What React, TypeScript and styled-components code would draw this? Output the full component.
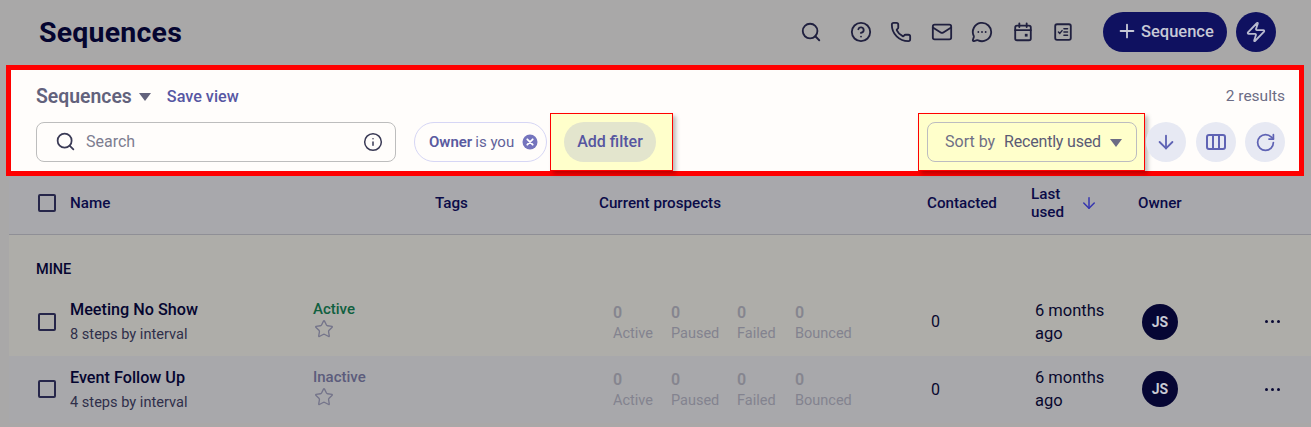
import React from "react";
import styled, { createGlobalStyle } from "styled-components";
import { ArrowDown, CircleHelp, Info, Mail, MessageCircleMore, Phone, Plus, RotateCw, Search, Star, Zap } from "lucide-react";

const GlobalStyle = createGlobalStyle`
    html, body {
        margin: 0;
        height: 100%;
        overflow: hidden;
    }
    body {
        background: #a9a8a8;
        font-family: Roboto, "Liberation Sans", sans-serif;
    }
`;

const Page = styled.div`
    width: 1311px;
    height: 427px;
    overflow: hidden;
`;

const Header = styled.header`
    height: 65px;
    display: flex;
    align-items: center;
    padding: 0 35px 1px 39px;
    box-sizing: border-box;
`;

const Title = styled.h1`
    margin: 0 auto 0 0;
    font-size: 28.5px;
    font-weight: 700;
    color: #050530;
    letter-spacing: 0.2px;
`;

const HeaderIcons = styled.div`
    display: flex;
    align-items: center;
    gap: 18.5px;
    color: #20203f;
    margin-right: 29px;
    & > svg {
        width: 22px;
        height: 22px;
    }
    & > svg:first-child {
        margin-right: 9.5px;
    }
`;

const NewButton = styled.button`
    height: 40px;
    width: 124px;
    border: none;
    border-radius: 20px;
    background: #0f1160;
    color: #c7c9d6;
    font: 500 16.5px Roboto, sans-serif;
    display: flex;
    align-items: center;
    gap: 3px;
    padding: 0 0 2px 13px;
`;

const BoltButton = styled.button`
    width: 40px;
    height: 40px;
    margin-left: 9px;
    border: none;
    border-radius: 50%;
    background: #0f1160;
    color: #b9bbd0;
    display: flex;
    align-items: center;
    justify-content: center;
    padding: 0;
`;

const Panel = styled.section`
    height: 111px;
    box-sizing: border-box;
    margin: 0 7px 0 6px;
    border: 5px solid #ff0000;
    background: #fffdfb;
    padding: 0 14px 0 25px;
`;

const PanelTop = styled.div`
    height: 52px;
    display: flex;
    align-items: center;
`;

const ViewName = styled.span`
    font-size: 19.4px;
    font-weight: 600;
    color: #62627c;
`;

const Caret = styled.span<{ $color: string }>`
    display: inline-block;
    width: 0;
    height: 0;
    border-left: 6.5px solid transparent;
    border-right: 6.5px solid transparent;
    border-top: 8px solid ${(p) => p.$color};
`;

const ViewCaret = styled(Caret)`
    margin: 1px 0 0 7px;
`;

const SaveView = styled.span`
    margin-left: 16px;
    font-size: 16.2px;
    font-weight: 500;
    color: #5757a3;
`;

const Results = styled.span`
    margin-left: auto;
    font-size: 15.5px;
    color: #6c6c85;
`;

const Controls = styled.div`
    display: flex;
    align-items: center;
    height: 40px;
`;

const SearchBox = styled.div`
    width: 360px;
    height: 40px;
    box-sizing: border-box;
    border: 1px solid #bdbdbd;
    border-radius: 8px;
    display: flex;
    align-items: center;
    padding: 0 12px 1px 18px;
    color: #3a3a55;
`;

const SearchText = styled.span`
    margin-left: 10px;
    margin-right: auto;
    font-size: 16px;
    color: #7d7d90;
`;

const OwnerChip = styled.div`
    margin-left: 18px;
    width: 133px;
    height: 40px;
    box-sizing: border-box;
    border: 1px solid #d6d6f5;
    border-radius: 20px;
    display: flex;
    align-items: center;
    padding: 0 0 1px 14px;
    font-size: 15px;
    color: #62629a;
`;

const OwnerStrong = styled.strong`
    font-weight: 600;
    color: #5a5aa0;
    margin-right: 3px;
`;

const ChipClose = styled.svg`
    margin-left: 8px;
`;

const Highlight = styled.div<{ $left: number; $right: number }>`
    height: 58px;
    box-sizing: border-box;
    background: #ffffcb;
    border: 1px solid #f00;
    box-shadow: 3px 3px 4px rgba(0, 0, 0, 0.25);
    display: flex;
    align-items: center;
    padding: 0 ${(p) => p.$right}px 0 ${(p) => p.$left}px;
`;

const FilterHighlight = styled(Highlight)`
    margin-left: 3px;
`;

const SortHighlight = styled(Highlight)`
    margin-left: auto;
`;

const AddFilter = styled.div`
    width: 92px;
    height: 40px;
    box-sizing: border-box;
    padding-bottom: 1px;
    border-radius: 20px;
    background: #e3e5cd;
    color: #5656a0;
    font-size: 16px;
    font-weight: 500;
    display: flex;
    align-items: center;
    justify-content: center;
`;

const SortBox = styled.div`
    width: 210px;
    height: 40px;
    box-sizing: border-box;
    border: 1px solid #bcbcc0;
    border-radius: 8px;
    display: flex;
    align-items: center;
    padding: 0 14px 1px 17px;
    font-size: 16px;
    color: #5b5b75;
`;

const SortLabel = styled.span`
    color: #6f6f86;
    margin-right: 9px;
`;

const SortValue = styled.span`
    letter-spacing: -0.2px;
`;

const SortCaret = styled(Caret)`
    margin-left: auto;
    margin-top: 2px;
`;

const RoundButton = styled.div`
    width: 40px;
    height: 40px;
    border-radius: 50%;
    margin-left: 9.5px;
    background: #e7e9f3;
    color: #5f63b4;
    display: flex;
    align-items: center;
    justify-content: center;
    flex-shrink: 0;
`;

const FirstRoundButton = styled(RoundButton)`
    margin-left: 1px;
`;

const TableWrap = styled.div`
    margin-left: 9px;
    background: #aeada9;
`;

const columns = "32px 243px 122px 164px 328px 104px 107px 127px 1fr";

const HeadRow = styled.div`
    display: grid;
    grid-template-columns: ${columns};
    align-items: center;
    height: 59px;
    box-sizing: border-box;
    padding: 0 0 4px 29px;
    background: #a8a8ac;
    border-bottom: 1px solid #8f8f96;
    font-size: 15.2px;
    font-weight: 500;
    color: #0b0b48;
`;

const NameHead = styled.div`
    grid-column: 2 / 4;
`;

const LastUsedHead = styled.div`
    display: flex;
    align-items: center;
    line-height: 18px;
    gap: 16px;
    color: #0b0b48;
`;

const LastUsedLabel = styled.div`
    width: 33px;
`;

const SortArrow = styled(ArrowDown)`
    color: #3636b0;
`;

const Box = styled.span`
    display: block;
    width: 14px;
    height: 14px;
    border: 2px solid #26264a;
    border-radius: 2px;
`;

const GroupLabel = styled.div`
    height: 53px;
    padding: 24px 0 0 27px;
    box-sizing: border-box;
    font-size: 14.5px;
    font-weight: 500;
    color: #050530;
    line-height: 22px;
`;

const Row = styled.div<{ $shaded: boolean }>`
    display: grid;
    grid-template-columns: ${columns};
    align-items: center;
    height: 67.5px;
    box-sizing: border-box;
    padding-left: 29px;
    background: ${(p) => (p.$shaded ? "#a8a8ab" : "#aeada9")};
`;

const NameCell = styled.div`
    display: flex;
    flex-direction: column;
    gap: 3px;
`;

const RowTitle = styled.div`
    font-size: 16.2px;
    font-weight: 500;
    color: #050530;
    line-height: 22px;
`;

const RowSub = styled.div`
    font-size: 14.6px;
    color: #2f2f4a;
    line-height: 20px;
`;

const StatusCell = styled.div<{ $active: boolean }>`
    font-size: 15px;
    font-weight: 500;
    line-height: 20px;
    color: ${(p) => (p.$active ? "#10603f" : "#5c5c7c")};
    margin-top: -5px;
`;

const StarIcon = styled(Star)`
    display: block;
    color: #74748a;
    margin: 0 0 0 1px;
`;

const Stats = styled.div`
    grid-column: 5;
    display: flex;
    padding: 2px 0 0 14px;
`;

const Stat = styled.div<{ $width: number }>`
    width: ${(p) => p.$width}px;
    color: #83838f;
    font-size: 14.5px;
    line-height: 21px;
`;

const StatNum = styled.div`
    font-size: 16px;
    font-weight: 600;
    color: #85858f;
`;

const Contacted = styled.div`
    padding-left: 4px;
    font-size: 16px;
    color: #08082e;
`;

const LastUsed = styled.div`
    padding-left: 4px;
    width: 80px;
    font-size: 16.5px;
    line-height: 23px;
    color: #08082e;
`;

const Avatar = styled.div`
    width: 36px;
    height: 36px;
    margin-left: 4px;
    border-radius: 50%;
    background: #060634;
    color: #c8c9d4;
    font-size: 14px;
    font-weight: 700;
    display: flex;
    align-items: center;
    justify-content: center;
`;

const More = styled.div`
    display: flex;
    gap: 3px;
`;

const Dot = styled.span`
    width: 3px;
    height: 3px;
    border-radius: 50%;
    background: #0a0a35;
`;

function CalendarIcon() {
    return (
        <svg width="24" height="24" viewBox="0 0 24 24" fill="none" stroke="currentColor" strokeWidth="2" strokeLinecap="round">
            <rect x="3.5" y="5" width="17" height="16" rx="2" />
            <path d="M3.5 10h17M8 2.5v4M16 2.5v4" />
            <rect x="14" y="14" width="3" height="3" fill="currentColor" stroke="none" />
        </svg>
    );
}

function ChecklistIcon() {
    return (
        <svg width="24" height="24" viewBox="0 0 24 24" fill="none" stroke="currentColor" strokeWidth="2" strokeLinecap="round" strokeLinejoin="round">
            <rect x="3.5" y="3.5" width="17" height="17" rx="2" />
            <path d="M13 8.5h4M13 12h4M13 15.5h4" strokeWidth="1.6" />
            <path d="M7 12l1.5 1.5L11 10.5" strokeWidth="1.6" />
        </svg>
    );
}

function ColumnsIcon() {
    return (
        <svg width="22" height="22" viewBox="0 0 22 22" fill="none" stroke="currentColor" strokeWidth="2" strokeLinejoin="round">
            <rect x="2" y="4" width="18" height="14" rx="2" />
            <path d="M8 4v14M14 4v14" />
        </svg>
    );
}

const sequences = [
    { name: "Meeting No Show", steps: "8 steps by interval", active: true },
    { name: "Event Follow Up", steps: "4 steps by interval", active: false }
];

const statColumns = [
    { label: "Active", width: 58 },
    { label: "Paused", width: 66 },
    { label: "Failed", width: 58 },
    { label: "Bounced", width: 70 }
];

export default function App() {
    return (
        <Page>
            <GlobalStyle />
            <Header>
                <Title>Sequences</Title>
                <HeaderIcons>
                    <Search strokeWidth={2} />
                    <CircleHelp strokeWidth={2} />
                    <Phone strokeWidth={2} />
                    <Mail strokeWidth={2} />
                    <MessageCircleMore strokeWidth={2} />
                    <CalendarIcon />
                    <ChecklistIcon />
                </HeaderIcons>
                <NewButton>
                    <Plus size={22} strokeWidth={2} />
                    Sequence
                </NewButton>
                <BoltButton>
                    <Zap size={22} strokeWidth={2} />
                </BoltButton>
            </Header>

            <Panel>
                <PanelTop>
                    <ViewName>Sequences</ViewName>
                    <ViewCaret $color="#62627c" />
                    <SaveView>Save view</SaveView>
                    <Results>2 results</Results>
                </PanelTop>
                <Controls>
                    <SearchBox>
                        <Search size={21} strokeWidth={2} />
                        <SearchText>Search</SearchText>
                        <Info size={20} strokeWidth={1.8} />
                    </SearchBox>
                    <OwnerChip>
                        <OwnerStrong>Owner</OwnerStrong> is you
                        <ChipClose width="16" height="16" viewBox="0 0 16 16">
                            <circle cx="8" cy="8" r="7.5" fill="#7474bd" />
                            <path d="M5.3 5.3l5.4 5.4M10.7 5.3l-5.4 5.4" stroke="#fff" strokeWidth="1.8" strokeLinecap="round" />
                        </ChipClose>
                    </OwnerChip>
                    <FilterHighlight $left={13} $right={16}>
                        <AddFilter>Add filter</AddFilter>
                    </FilterHighlight>
                    <SortHighlight $left={8} $right={7}>
                        <SortBox>
                            <SortLabel>Sort by</SortLabel>
                            <SortValue>Recently used</SortValue>
                            <SortCaret $color="#6c6c85" />
                        </SortBox>
                    </SortHighlight>
                    <FirstRoundButton>
                        <ArrowDown size={22} strokeWidth={2} />
                    </FirstRoundButton>
                    <RoundButton>
                        <ColumnsIcon />
                    </RoundButton>
                    <RoundButton>
                        <RotateCw size={21} strokeWidth={2} />
                    </RoundButton>
                </Controls>
            </Panel>

            <TableWrap>
                <HeadRow>
                    <Box />
                    <NameHead>Name</NameHead>
                    <div>Tags</div>
                    <div>Current prospects</div>
                    <div>Contacted</div>
                    <LastUsedHead>
                        <LastUsedLabel>Last used</LastUsedLabel>
                        <SortArrow size={18} strokeWidth={2} />
                    </LastUsedHead>
                    <div>Owner</div>
                </HeadRow>
                <GroupLabel>MINE</GroupLabel>
                {sequences.map((seq, i) => (
                    <Row key={seq.name} $shaded={i === 1}>
                        <Box />
                        <NameCell>
                            <RowTitle>{seq.name}</RowTitle>
                            <RowSub>{seq.steps}</RowSub>
                        </NameCell>
                        <StatusCell $active={seq.active}>
                            {seq.active ? "Active" : "Inactive"}
                            <StarIcon size={20} strokeWidth={1.6} />
                        </StatusCell>
                        <Stats>
                            {statColumns.map((col) => (
                                <Stat key={col.label} $width={col.width}>
                                    <StatNum>0</StatNum>
                                    {col.label}
                                </Stat>
                            ))}
                        </Stats>
                        <Contacted>0</Contacted>
                        <LastUsed>6 months ago</LastUsed>
                        <Avatar>JS</Avatar>
                        <More>
                            <Dot />
                            <Dot />
                            <Dot />
                        </More>
                    </Row>
                ))}
            </TableWrap>
        </Page>
    );
}
